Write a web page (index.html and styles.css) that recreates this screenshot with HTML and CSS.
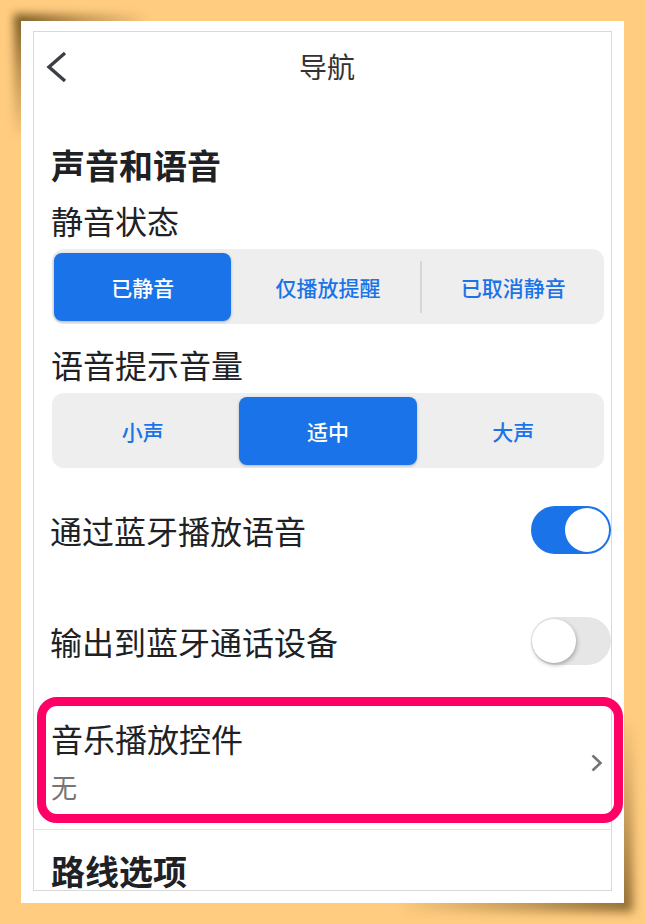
FILE: index.html
```html
<!DOCTYPE html>
<html lang="zh-CN">
<head>
<meta charset="utf-8">
<title>导航</title>
<link rel="stylesheet" href="styles.css">
</head>
<body>
<div class="card">
  <div class="frame">
    <header class="topbar">
      <svg class="back" width="24" height="34" viewBox="0 0 24 34"><polyline points="19,3 3,17 19,31" fill="none" stroke="#3c3f43" stroke-width="3.4" stroke-linecap="butt" stroke-linejoin="miter"/></svg>
      <div class="title">导航</div>
      <div></div>
    </header>

    <h2 class="section">声音和语音</h2>

    <div class="label">静音状态</div>
    <div class="seg">
      <div class="opt on">已静音</div>
      <div class="opt">仅播放提醒</div>
      <div class="sep"></div>
      <div class="opt">已取消静音</div>
    </div>

    <div class="label label2">语音提示音量</div>
    <div class="seg">
      <div class="opt">小声</div>
      <div class="opt on">适中</div>
      <div class="opt">大声</div>
    </div>

    <div class="row first">
      <div class="row-text">通过蓝牙播放语音</div>
      <div class="switch is-on"><span class="knob"></span></div>
    </div>
    <div class="row">
      <div class="row-text">输出到蓝牙通话设备</div>
      <div class="switch"><span class="knob"></span></div>
    </div>

    <div class="link-row">
      <div class="link-text">
        <div class="link-title">音乐播放控件</div>
        <div class="link-sub">无</div>
      </div>
      <svg class="chev" width="12" height="18" viewBox="0 0 12 18"><polyline points="1.5,1.5 9.5,9 1.5,16.5" fill="none" stroke="#757575" stroke-width="2.6"/></svg>
      <div class="highlight"></div>
    </div>

    <h2 class="section section2">路线选项</h2>
  </div>
</div>
</body>
</html>
```

FILE: styles.css
```css
html, body {
  margin: 0;
  padding: 0;
}
body {
  background: #ffcc80;
  font-family: "Noto Sans CJK SC", "Noto Sans", sans-serif;
  color: #202124;
  width: 645px;
  height: 924px;
  overflow: hidden;
}
.card {
  position: relative;
  margin: 21px 0 0 21px;
  width: 603px;
  height: 882px;
  box-sizing: border-box;
  padding: 10px 12px 12px 12px;
  background: #fff;
}
.card::before {
  content: "";
  position: absolute;
  left: -7px;
  top: -7px;
  width: 130px;
  height: 120px;
  background: radial-gradient(ellipse at 0 0, rgba(70,45,0,0.75) 0, rgba(70,45,0,0.35) 35%, rgba(70,45,0,0) 75%);
  filter: blur(4px);
  z-index: -1;
}
.card::after {
  content: "";
  position: absolute;
  right: -9px;
  bottom: -9px;
  width: 230px;
  height: 190px;
  background: radial-gradient(ellipse at 100% 100%, rgba(70,45,0,0.6) 0, rgba(70,45,0,0.3) 35%, rgba(70,45,0,0) 75%);
  filter: blur(5px);
  z-index: -1;
}
.frame {
  height: 860px;
  box-sizing: border-box;
  border: 1px solid #d9d9d9;
  clip-path: inset(0 -20px 0 -20px);
}
.topbar {
  height: 72px;
  display: grid;
  grid-template-columns: 1fr auto 1fr;
  align-items: start;
}
.back {
  display: block;
  margin: 18px 0 0 12px;
}
.title {
  font-size: 28px;
  line-height: 68px;
  color: #333;
  padding-left: 9px;
}
.section {
  margin: 39px 0 0 0;
  padding-left: 17px;
  font-size: 34px;
  line-height: 44px;
  font-weight: 700;
  color: #202124;
}
.section2 {
  margin-top: 19px;
}
.label {
  margin-top: 13px;
  padding-left: 17px;
  font-size: 32px;
  line-height: 40px;
  color: #202124;
}
.label2 {
  margin-top: 20px;
}
.seg {
  margin: 9px 7px 0 18px;
  height: 75px;
  box-sizing: border-box;
  padding: 4px 2px 3px 2px;
  background: #eeeeee;
  border-radius: 12px;
  display: flex;
  align-items: stretch;
  gap: 8px;
}
.opt {
  flex: 1 1 0;
  display: flex;
  align-items: center;
  justify-content: center;
  font-size: 21px;
  font-weight: 500;
  color: #1a73e8;
  border-radius: 8px;
}
.opt.on {
  background: #1a73e8;
  color: #fff;
  box-shadow: 0 1px 3px rgba(0,0,0,0.25);
}
.sep {
  width: 2px;
  margin: 8px -5px 8px -5px;
  background: #d6d6d6;
  flex: 0 0 2px;
}
.row {
  height: 111px;
  display: flex;
  align-items: center;
  justify-content: space-between;
  padding-left: 16px;
}
.row.first {
  margin-top: 6px;
}
.row-text {
  font-size: 32px;
  line-height: 40px;
  color: #202124;
}
.switch {
  position: relative;
  width: 80px;
  height: 48px;
  border-radius: 24px;
  background: #e6e6e6;
  flex: 0 0 auto;
}
.switch .knob {
  position: absolute;
  left: 1px;
  top: 2px;
  width: 44px;
  height: 44px;
  border-radius: 50%;
  background: #fff;
  box-shadow: 1px 2px 4px rgba(0,0,0,0.28);
}
.switch.is-on {
  background: #1a73e8;
}
.switch.is-on .knob {
  left: auto;
  right: 2px;
  box-shadow: none;
}
.link-row {
  position: relative;
  height: 134px;
  box-sizing: border-box;
  border-bottom: 1px solid #e4e4e4;
  display: flex;
  align-items: center;
  justify-content: space-between;
  padding: 0 8px 0 17px;
}
.link-title {
  font-size: 32px;
  line-height: 40px;
  color: #202124;
}
.link-sub {
  margin-top: 13px;
  font-size: 26px;
  line-height: 32px;
  color: #757575;
}
.link-text {
  margin-top: -4px;
}
.chev {
  display: block;
}
.highlight {
  position: absolute;
  left: 3px;
  right: -12px;
  top: 1px;
  bottom: 6px;
  border: 9px solid #ff0066;
  border-radius: 20px;
  pointer-events: none;
}
```
